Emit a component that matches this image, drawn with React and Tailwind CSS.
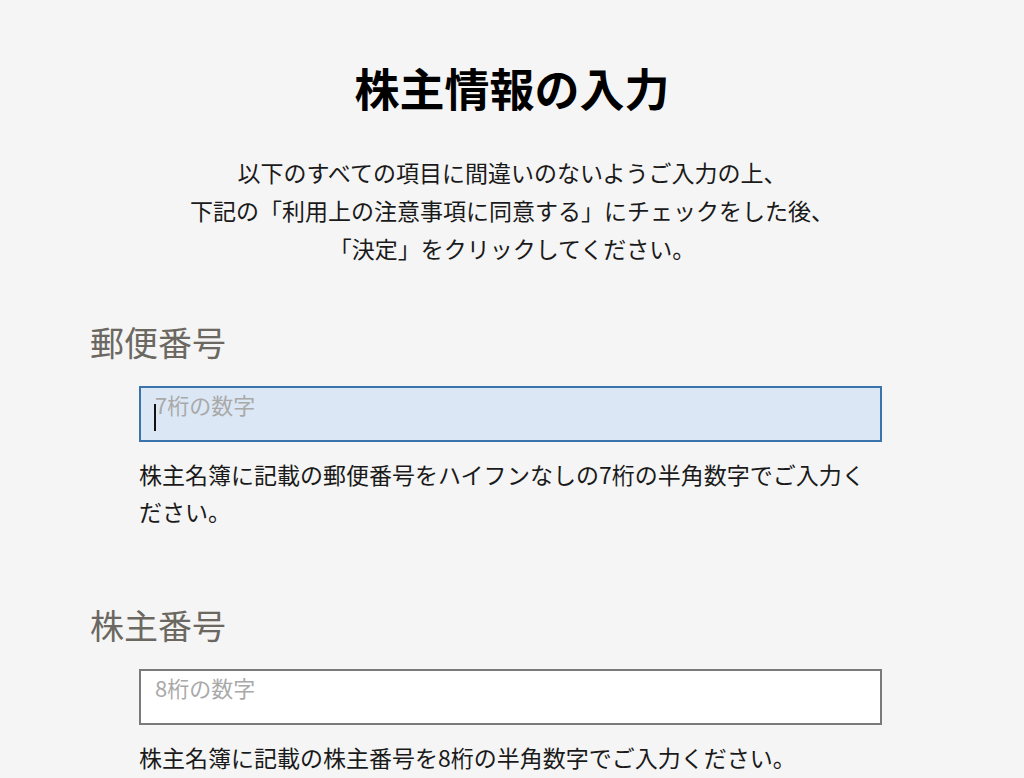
import { useState } from 'react'

const font = { fontFamily: '"Noto Sans CJK JP", "Noto Sans", sans-serif' }

function Field({ label, placeholder, help, focused, first }) {
  return (
    <section className={first ? 'mt-[51px]' : 'mt-[71px]'}>
      <h2 className="text-[34px] leading-[48px] text-[#6b6761] font-normal">{label}</h2>
      <div className="mt-[20px] ml-[49px] mr-[52px]">
        <div className="relative">
          <textarea
            rows={1}
            placeholder={placeholder}
            className={
              'block w-full h-[56px] resize-none px-[14px] pt-[1px] text-[22px] leading-[30px] outline-none placeholder:text-[#a9a9a9] ' +
              (focused
                ? 'bg-[#dbe7f4] border-2 border-[#3b73ab]'
                : 'bg-white border-2 border-[#7a7a7a]')
            }
          />
          {focused && (
            <span className="absolute left-[15px] top-[18px] w-[2px] h-[27px] bg-[#111]" />
          )}
        </div>
        <p className="mt-[14px] text-[23px] leading-[37px] text-[#1a1a1a]">{help}</p>
      </div>
    </section>
  )
}

export default function App() {
  const [fields] = useState([
    {
      label: '郵便番号',
      placeholder: '7桁の数字',
      help: '株主名簿に記載の郵便番号をハイフンなしの7桁の半角数字でご入力ください。',
      focused: true,
    },
    {
      label: '株主番号',
      placeholder: '8桁の数字',
      help: '株主名簿に記載の株主番号を8桁の半角数字でご入力ください。',
      focused: false,
    },
  ])

  return (
    <div className="min-h-[778px] bg-[#f5f5f5] overflow-hidden" style={font}>
      <div className="mx-[90px] pt-[60px]">
        <h1 className="text-center text-[45px] leading-[56px] font-bold text-black">株主情報の入力</h1>
        <p className="mt-[37px] text-center text-[23px] leading-[38px] text-[#1a1a1a]">
          以下のすべての項目に間違いのないようご入力の上、<br />
          下記の「利用上の注意事項に同意する」にチェックをした後、<br />
          「決定」をクリックしてください。
        </p>
        {fields.map((f, i) => (
          <Field key={f.label} {...f} first={i === 0} />
        ))}
      </div>
    </div>
  )
}
